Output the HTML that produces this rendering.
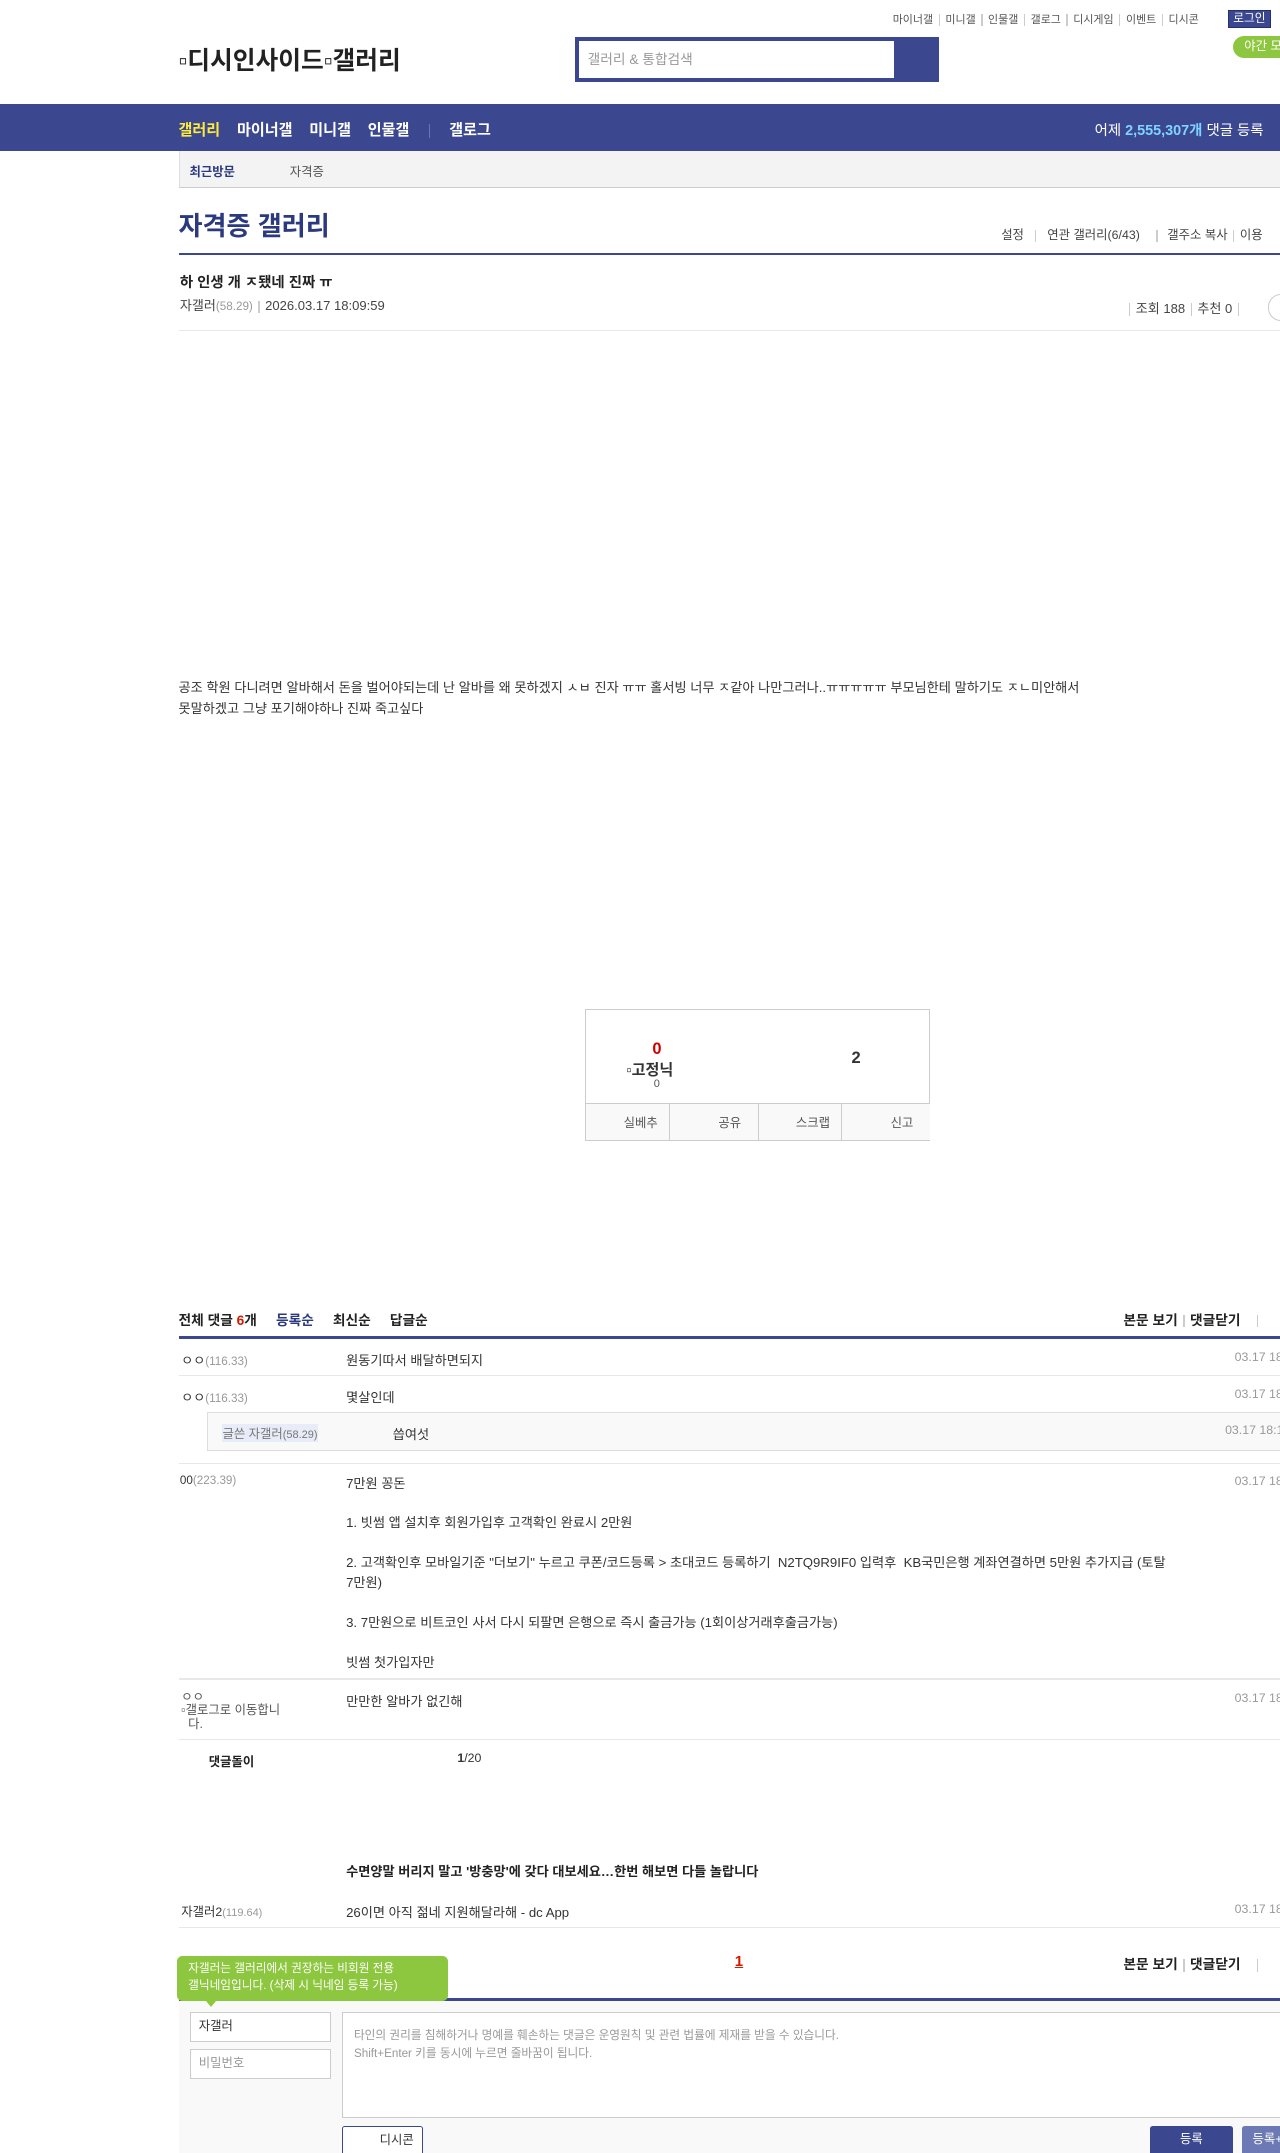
<!DOCTYPE html>
<html><head><meta charset="utf-8"><style>
html,body{margin:0;padding:0;background:#fff;overflow:hidden}
body{width:1280px;height:2153px;position:relative}
#w{zoom:1.37339;width:932px;height:1568px;position:relative;overflow:hidden;font-family:"Liberation Sans","Noto Sans CJK KR",sans-serif;color:#333;font-size:11px}
.a{position:absolute;white-space:nowrap}
.g{color:#999}
.sep{display:inline-block;width:1px;height:9px;background:#ccc;margin:0 4px;vertical-align:middle}
.b{font-weight:bold}
.hr{position:absolute;left:130px;right:0;height:1px;background:#e8e8e8}
</style></head><body><div id="w">
<div class="a" style="top:8px;left:650px;font-size:8px;color:#555">마이너갤<span class="sep"></span>미니갤<span class="sep"></span>인물갤<span class="sep"></span>갤로그<span class="sep"></span>디시게임<span class="sep"></span>이벤트<span class="sep"></span>디시콘</div>
<div class="a" style="top:7px;left:894px;width:30px;height:12px;background:#3b4890;color:#fff;font-size:8.5px;text-align:center;line-height:12px;border:1px solid #26306a">로그인</div>
<div class="a" style="top:26px;left:898px;width:50px;height:16px;background:#8dc63f;border-radius:9px;color:#fff;font-size:9px;line-height:16px;padding-left:8px">야간 모드</div>
<div class="a b" style="top:30px;left:130px;font-size:18px;color:#222">▫디시인사이드▫갤러리</div>
<div class="a" style="top:27px;left:419px;width:259px;height:27px;border:3px solid #3b4890;background:#3b4890"><div style="width:229px;height:27px;background:#fff;font-size:10px;color:#999;line-height:27px;padding-left:6px;box-sizing:border-box">갤러리 &amp; 통합검색</div></div>
<div class="a" style="top:76px;left:0;width:932px;height:34px;background:#3b4890"></div>
<div class="a b" style="top:86px;left:130px;font-size:11px;color:#fff"><span style="color:#ffeb3b">갤러리</span>&nbsp;&nbsp;&nbsp;&nbsp;마이너갤&nbsp;&nbsp;&nbsp;&nbsp;미니갤&nbsp;&nbsp;&nbsp;&nbsp;인물갤<span style="display:inline-block;width:1px;height:10px;background:#6a74b0;margin:0 14px;vertical-align:middle"></span>갤로그</div>
<div class="a" style="top:87px;left:797px;font-size:10.5px;color:#fff">어제 <b style="color:#7fd3ff">2,555,307개</b> 댓글 등록</div>
<div class="a" style="top:110px;left:130px;width:802px;height:26px;background:#f3f3f3;border-bottom:1px solid #ccc;border-left:1px solid #ddd"></div>
<div class="a b" style="top:118px;left:138px;font-size:9px;color:#2b3a7e">최근방문</div>
<div class="a" style="top:118px;left:211px;font-size:9px;color:#555">자격증</div>
<div class="a b" style="top:149px;left:130px;font-size:19px;color:#2b3a7e">자격증 갤러리</div>
<div class="a" style="top:164px;left:729px;font-size:9px;color:#444">설정<span class="sep" style="margin:0 8px"></span>연관 갤러리(6/43)<span class="sep" style="margin:0 7px 0 12px"></span>갤주소 복사<span class="sep"></span>이용</div>
<div class="a" style="top:184px;left:130px;width:802px;height:2px;background:#3b4890"></div>
<div class="a b" style="top:197px;left:131px;font-size:10.5px;color:#222">하 인생 개 ㅈ됐네 진짜 ㅠ</div>
<div class="a" style="top:215px;left:131px;font-size:9.5px;color:#444">자갤러<span class="g" style="font-size:8.5px">(58.29)</span><span class="sep"></span>2026.03.17 18:09:59</div>
<div class="a" style="top:217px;left:818px;font-size:9.5px;color:#444"><span class="sep"></span>조회 188<span class="sep"></span>추천 0<span class="sep"></span></div>
<div class="a" style="top:214px;left:923px;width:18px;height:18px;border:1px solid #ccc;border-radius:50%"></div>
<div class="hr" style="top:240px"></div>
<div class="a" style="top:494px;left:130px;font-size:9.6px;line-height:15px;color:#333;white-space:normal;width:660px">공조 학원 다니려면 알바해서 돈을 벌어야되는데 난 알바를 왜 못하겠지 ㅅㅂ 진자 ㅠㅠ 홀서빙 너무 ㅈ같아 나만그러나..ㅠㅠㅠㅠㅠ 부모님한테 말하기도 ㅈㄴ미안해서 못말하겠고 그냥 포기해야하나 진짜 죽고싶다</div>
<div class="a" style="top:735px;left:426px;width:250px;height:94px;border:1px solid #ccc"></div>
<div class="a b" style="top:757px;left:475px;font-size:12px;color:#c00">0</div>
<div class="a b" style="top:770px;left:456px;font-size:11px;color:#333">▫고정닉</div>
<div class="a" style="top:785px;left:476px;font-size:8px;color:#555">0</div>
<div class="a b" style="top:764px;left:620px;font-size:12px;color:#333">2</div>
<div class="a" style="top:803px;left:427px;width:250px;height:26px;border-top:1px solid #ccc;background:#f9f9f9;display:flex;font-size:9px;color:#555">
<div style="flex:1;border-right:1px solid #ccc;text-align:right;padding-right:8px;line-height:28px">실베추</div>
<div style="flex:1;border-right:1px solid #ccc;text-align:right;padding-right:12px;line-height:28px">공유</div>
<div style="flex:1;border-right:1px solid #ccc;text-align:right;padding-right:8px;line-height:28px">스크랩</div>
<div style="flex:1;text-align:right;padding-right:12px;line-height:28px">신고</div></div>
<div class="a b" style="top:953px;left:130px;font-size:10px;color:#222">전체 댓글 <span style="color:#d31900">6</span>개&nbsp;&nbsp;&nbsp;&nbsp;&nbsp;<span style="color:#2b3a7e">등록순</span>&nbsp;&nbsp;&nbsp;&nbsp;&nbsp;최신순&nbsp;&nbsp;&nbsp;&nbsp;&nbsp;답글순</div>
<div class="a b" style="top:953px;left:818px;font-size:10px;color:#222">본문 보기<span class="sep"></span>댓글닫기<span class="sep" style="margin-left:12px"></span></div>
<div class="a" style="top:973px;left:130px;width:802px;height:2px;background:#3b4890"></div>
<div class="a" style="top:983px;left:132px;font-size:9.5px">ㅇㅇ<span class="g" style="font-size:8.5px">(116.33)</span></div>
<div class="a" style="top:983px;left:252px;font-size:9.6px">원동기따서 배달하면되지</div>
<div class="a g" style="top:983px;left:899px;font-size:9px">03.17 18:10:11</div>
<div class="hr" style="top:1001px"></div>
<div class="a" style="top:1010px;left:132px;font-size:9.5px">ㅇㅇ<span class="g" style="font-size:8.5px">(116.33)</span></div>
<div class="a" style="top:1010px;left:252px;font-size:9.6px">몇살인데</div>
<div class="a g" style="top:1010px;left:899px;font-size:9px">03.17 18:10:31</div>
<div class="a" style="top:1028px;left:151px;width:781px;height:27px;background:#f9f9f9;border:1px solid #ddd;border-right:0"></div>
<div class="a" style="top:1037px;left:162px;font-size:9px;color:#777;background:#e8ecf8">글쓴 자갤러<span style="font-size:8px">(58.29)</span></div>
<div class="a" style="top:1037px;left:286px;font-size:9.6px">씁여섯</div>
<div class="a g" style="top:1036px;left:892px;font-size:9px">03.17 18:11:05</div>
<div class="hr" style="top:1065px"></div>
<div class="a" style="top:1073px;left:131px;font-size:8.5px">00<span class="g">(223.39)</span></div>
<div class="a" style="top:1073px;left:252px;font-size:9.6px;line-height:14.5px;white-space:normal;width:600px">7만원 꽁돈<br><br>1. 빗썸 앱 설치후 회원가입후 고객확인 완료시 2만원<br><br>2. 고객확인후 모바일기준 "더보기" 누르고 쿠폰/코드등록 &gt; 초대코드 등록하기&nbsp; N2TQ9R9IF0 입력후&nbsp; KB국민은행 계좌연결하면 5만원 추가지급 (토탈7만원)<br><br>3. 7만원으로 비트코인 사서 다시 되팔면 은행으로 즉시 출금가능 (1회이상거래후출금가능)<br><br>빗썸 첫가입자만</div>
<div class="a g" style="top:1073px;left:899px;font-size:9px">03.17 18:12:40</div>
<div class="hr" style="top:1222px"></div>
<div class="a" style="top:1231px;left:132px;font-size:9px;line-height:10px;color:#555">ㅇㅇ<br>▫갤로그로 이동합니<br>&nbsp;&nbsp;다.</div>
<div class="a" style="top:1231px;left:252px;font-size:9.6px">만만한 알바가 없긴해</div>
<div class="a g" style="top:1231px;left:899px;font-size:9px">03.17 18:13:02</div>
<div class="hr" style="top:1266px"></div>
<div class="a b" style="top:1276px;left:152px;font-size:9px;color:#222">댓글돌이</div>
<div class="a" style="top:1275px;left:333px;font-size:9px"><b>1</b>/20</div>
<div class="a b" style="top:1355px;left:252px;font-size:9.6px;color:#222">수면양말 버리지 말고 '방충망'에 갖다 대보세요…한번 해보면 다들 놀랍니다</div>
<div class="a" style="top:1385px;left:132px;font-size:9px">자갤러2<span class="g" style="font-size:8px">(119.64)</span></div>
<div class="a" style="top:1385px;left:252px;font-size:9.6px">26이면 아직 젊네 지원해달라해 - dc App</div>
<div class="a g" style="top:1385px;left:899px;font-size:9px">03.17 18:20:14</div>
<div class="hr" style="top:1403px"></div>
<div class="a b" style="top:1422px;left:535px;font-size:11px;color:#d31900;text-decoration:underline">1</div>
<div class="a b" style="top:1422px;left:818px;font-size:10px;color:#222">본문 보기<span class="sep"></span>댓글닫기<span class="sep" style="margin-left:12px"></span></div>
<div class="a" style="top:1455px;left:130px;width:802px;height:2px;background:#3b4890"></div>
<div class="a" style="top:1457px;left:130px;width:802px;height:111px;background:#f9f9f9"></div>
<div class="a" style="top:1424px;left:129px;width:197px;height:33px;background:#8dc63f;border-radius:4px;color:#fff;font-size:8.5px;line-height:12px;padding:4px 0 0 8px;box-sizing:border-box;white-space:normal">자갤러는 갤러리에서 권장하는 비회원 전용<br>갤닉네임입니다. (삭제 시 닉네임 등록 가능)</div>
<div class="a" style="top:1457px;left:150px;width:0;height:0;border-left:4px solid transparent;border-right:4px solid transparent;border-top:5px solid #8dc63f"></div>
<div class="a" style="top:1465px;left:138px;width:103px;height:22px;background:#fff;border:1px solid #ccc;box-sizing:border-box;font-size:9px;line-height:20px;padding-left:6px;color:#333">자갤러</div>
<div class="a" style="top:1492px;left:138px;width:103px;height:22px;background:#fff;border:1px solid #ccc;box-sizing:border-box;font-size:9px;line-height:20px;padding-left:6px;color:#999">비밀번호</div>
<div class="a" style="top:1465px;left:249px;width:690px;height:77px;background:#fff;border:1px solid #ccc;box-sizing:border-box;font-size:8.5px;line-height:13px;padding:10px 8px;color:#999;white-space:normal">타인의 권리를 침해하거나 명예를 훼손하는 댓글은 운영원칙 및 관련 법률에 제재를 받을 수 있습니다.<br>Shift+Enter 키를 동시에 누르면 줄바꿈이 됩니다.</div>
<div class="a" style="top:1548px;left:249px;width:59px;height:24px;background:#fff;border:1px solid #3b4890;border-radius:2px;box-sizing:border-box;font-size:9px;line-height:20px;text-align:right;padding-right:6px;color:#333">디시콘</div>
<div class="a" style="top:1548px;left:837px;width:61px;height:24px;background:#3b4890;color:#fff;font-size:9px;line-height:20px;text-align:center;border-radius:2px">등록</div>
<div class="a" style="top:1548px;left:904px;width:40px;height:24px;background:#6d79b4;color:#fff;font-size:9px;line-height:20px;padding-left:8px;border-radius:2px">등록+추천</div>
</div></body></html>
